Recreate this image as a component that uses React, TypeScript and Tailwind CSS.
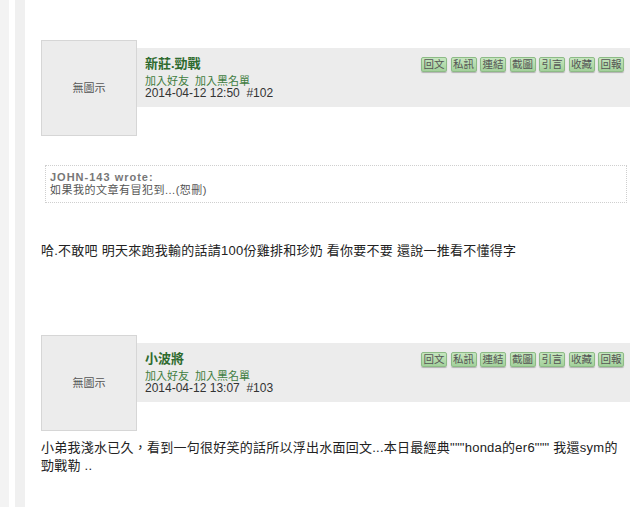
const BUTTONS = ['回文', '私訊', '連結', '截圖', '引言', '收藏', '回報'];

const FONT = "font-['Liberation_Sans','Noto_Sans_CJK_TC',sans-serif]";

const PostHeader = ({ name, date, no }: { name: string; date: string; no: string }) => {
  return (
    <div className="flex">
      <div className="flex h-[96px] w-[96px] shrink-0 items-center justify-center border border-[#d6d6d6] bg-[#ececec] text-[11px] text-[#555]">
        無圖示
      </div>
      <div className="mt-2 flex h-[59px] flex-1 items-start justify-between bg-[#ececec] pr-[6px]">
        <div className="pl-2 pt-2">
          <p className="text-[13px] font-bold leading-[16px] text-[#2f6b2f]">{name}</p>
          <p className="mt-[3px] text-[11px] leading-[12px] text-[#3f7d3f]">加入好友&nbsp; 加入黑名單</p>
          <p className="text-[12px] leading-[12px] text-[#333]">
            {date}&nbsp;&nbsp;{no}
          </p>
        </div>
        <div className="mt-[9px] flex gap-[3.5px]">
          {BUTTONS.map((label) => (
            <span
              key={label}
              className="flex h-[15px] w-[26px] items-center justify-center rounded-[2px] border border-[#8dbb86] bg-gradient-to-b from-[#c6e6bf] to-[#a3d19b] text-[10.5px] leading-none text-[#555] shadow-[0_1px_1px_rgba(0,0,0,0.25)]"
            >
              {label}
            </span>
          ))}
        </div>
      </div>
    </div>
  );
};

const App = () => {
  return (
    <div className={`flex min-h-[507px] bg-white ${FONT}`}>
      <div className="w-[9px] shrink-0 bg-[#f3f3f3]" />
      <div className="w-[6px] shrink-0 bg-white" />
      <div className="w-[10px] shrink-0 bg-[#f0f0f0]" />
      <div className="flex-1 pl-4 pr-[10px] pt-10">
        <PostHeader name="新莊.勁戰" date="2014-04-12 12:50" no="#102" />

        <div className="ml-1 mr-[3px] mt-[29px] border border-dotted border-[#cfcfcf] px-[4px] pb-[5px] pt-[5px]">
          <p className="text-[11px] font-bold leading-[13px] tracking-[1px] text-[#777]">JOHN-143 wrote:</p>
          <p className="text-[11px] leading-[13px] tracking-[0.5px] text-[#555]">如果我的文章有冒犯到...(恕刪)</p>
        </div>

        <p className="mt-[39px] text-[13px] leading-[18px] tracking-[0.25px] text-[#222]">
          哈.不敢吧 明天來跑我輸的話請100份雞排和珍奶 看你要不要 還說一推看不懂得字
        </p>

        <div className="mt-[75px]">
          <PostHeader name="小波將" date="2014-04-12 13:07" no="#103" />
        </div>

        <p className="mt-2 text-[13px] leading-[18px] tracking-[0.25px] text-[#222]">
          小弟我淺水已久，看到一句很好笑的話所以浮出水面回文...本日最經典"""honda的er6""" 我還sym的勁戰勒 ..
        </p>
      </div>
    </div>
  );
};

export default App;
